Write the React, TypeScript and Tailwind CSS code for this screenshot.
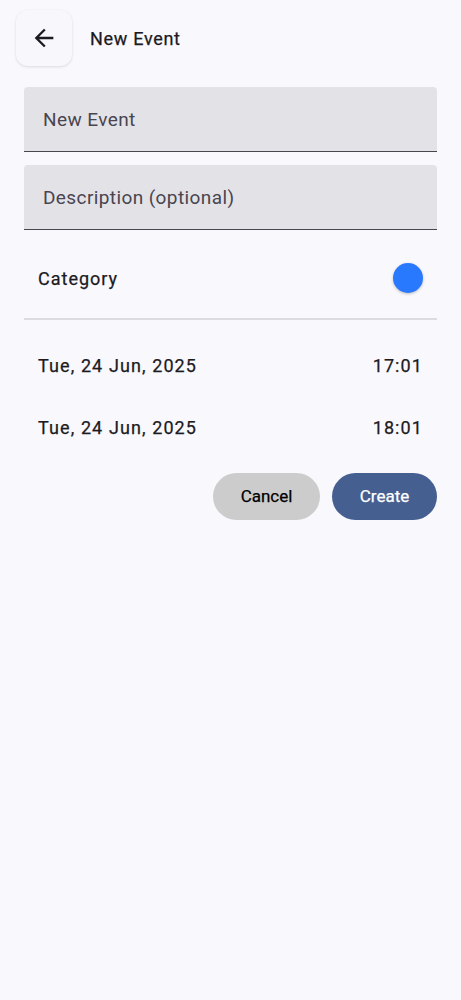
import { useState } from 'react';

const medium = '[-webkit-text-stroke:0.25px_currentColor]';

export default function App() {
  const [title, setTitle] = useState('');
  const [description, setDescription] = useState('');

  return (
    <div
      className="min-h-screen w-full bg-[#f9f8fd] text-[#1c1b1f]"
      style={{ fontFamily: 'Roboto, "Noto Sans", sans-serif' }}
    >
      {/* Top bar */}
      <div className="flex h-[76px] items-center pl-4">
        <button className="flex h-[56px] w-[56px] items-center justify-center rounded-[12px] bg-[#f8f7fc] shadow-[0_1px_3px_rgba(0,0,0,0.12)]">
          <svg width="28" height="28" viewBox="0 0 24 24" fill="#1c1b1f">
            <path d="M20 11H7.83l5.59-5.59L12 4l-8 8 8 8 1.41-1.41L7.83 13H20v-2z" />
          </svg>
        </button>
        <h1 className={`ml-[18px] text-[18px] font-normal tracking-[0.7px] ${medium}`}>
          New Event
        </h1>
      </div>

      <div className="mt-[11px] flex flex-col px-6">
        {/* Text fields */}
        <input
          value={title}
          onChange={(e) => setTitle(e.target.value)}
          placeholder="New Event"
          className="h-[65px] w-full rounded-t-[4px] border-b border-[#49454f] bg-[#e3e2e7] px-[19px] text-[19px] tracking-[0.4px] text-[#1c1b1f] placeholder:text-[#49454f] outline-none"
        />
        <input
          value={description}
          onChange={(e) => setDescription(e.target.value)}
          placeholder="Description (optional)"
          className="mt-[13px] h-[65px] w-full rounded-t-[4px] border-b border-[#49454f] bg-[#e3e2e7] px-[19px] text-[19px] tracking-[0.4px] text-[#1c1b1f] placeholder:text-[#49454f] outline-none"
        />

        {/* Category */}
        <div className="mt-[8px] flex h-[80px] items-center justify-between px-[14px]">
          <span className={`text-[18px] tracking-[1px] ${medium}`}>Category</span>
          <div className="h-[30px] w-[30px] rounded-full bg-[#2979ff] shadow-[0_1px_3px_rgba(0,0,0,0.25)]" />
        </div>
        <div className="h-[2px] w-full bg-[#dcdbe0]" />

        {/* Dates */}
        <div className="mt-[14px] flex h-[62px] items-center justify-between px-[14px]">
          <span className={`text-[18px] tracking-[1.1px] ${medium}`}>Tue, 24 Jun, 2025</span>
          <span className={`text-[18px] tracking-[1.1px] ${medium}`}>17:01</span>
        </div>
        <div className="flex h-[62px] items-center justify-between px-[14px]">
          <span className={`text-[18px] tracking-[1.1px] ${medium}`}>Tue, 24 Jun, 2025</span>
          <span className={`text-[18px] tracking-[1.1px] ${medium}`}>18:01</span>
        </div>

        {/* Actions */}
        <div className="mt-[15px] flex justify-end gap-3">
          <button className={`h-[47px] w-[107px] rounded-full bg-[#cccccc] text-[17px] text-black ${medium}`}>
            Cancel
          </button>
          <button className={`h-[47px] w-[105px] rounded-full bg-[#455f91] text-[17px] text-white ${medium}`}>
            Create
          </button>
        </div>
      </div>
    </div>
  );
}
